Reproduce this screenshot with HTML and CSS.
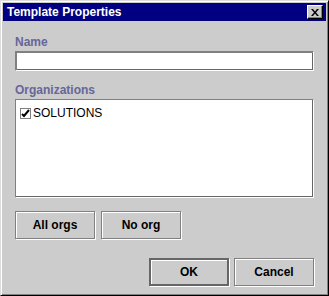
FILE: index.html
```html
<!DOCTYPE html>
<html lang="en">
<head>
    <meta charset="UTF-8">
    <title>Template Properties</title>
    <link rel="stylesheet" href="styles.css">
</head>
<body>

    <div class="window">

        <div class="titlebar">
            <span class="title">Template Properties</span>
            <button class="close">
                <svg width="8" height="7" viewBox="0 0 8 7">
                    <path d="M0 0h2l2 2.5L6 0h2L5 3.5 8 7H6L4 4.5 2 7H0l3-3.5z" fill="#000"/>
                </svg>
            </button>
        </div>

        <div class="content">

            <label class="field-label">Name</label>
            <div class="text-field"></div>

            <label class="field-label orgs-label">Organizations</label>
            <div class="list">
                <div class="list-item">
                    <span class="check">
                        <svg width="9" height="9" viewBox="0 0 9 9">
                            <path d="M1 5l2 2 5-6" stroke="#000" stroke-width="2" fill="none"/>
                        </svg>
                    </span>
                    <span>SOLUTIONS</span>
                </div>
            </div>

            <div class="org-buttons">
                <button class="btn">All orgs</button>
                <button class="btn">No org</button>
            </div>

            <div class="dialog-buttons">
                <button class="btn default">OK</button>
                <button class="btn">Cancel</button>
            </div>

        </div>

    </div>

</body>
</html>
```

FILE: styles.css
```css
* {
    margin: 0;
    padding: 0;
    box-sizing: border-box;
}

body {
    background: #cccccc;
    font-family: "Liberation Sans", Arial, sans-serif;
}

.window {
    width: 329px;
    height: 296px;
    background: #cccccc;
    border-top: 1px solid #dddddd;
    border-left: 1px solid #dddddd;
    border-right: 1px solid #000000;
    border-bottom: 1px solid #000000;
    box-shadow: inset 1px 1px 0 #ffffff, inset -1px -1px 0 #808080;
    padding: 2px;
    display: flex;
    flex-direction: column;
}

.titlebar {
    height: 18px;
    background: #000080;
    display: flex;
    align-items: center;
    justify-content: space-between;
    padding: 0 3px 0 4px;
}

.title {
    color: #ffffff;
    font-weight: bold;
    font-size: 12px;
}

.close {
    width: 16px;
    height: 14px;
    background: #cccccc;
    border-top: 1px solid #ffffff;
    border-left: 1px solid #ffffff;
    border-right: 1px solid #000000;
    border-bottom: 1px solid #000000;
    box-shadow: inset -1px -1px 0 #808080;
    display: flex;
    align-items: center;
    justify-content: center;
}

.content {
    padding: 14px 12px 0 12px;
    display: flex;
    flex-direction: column;
}

.field-label {
    color: #666699;
    font-weight: bold;
    font-size: 12px;
    height: 15px;
    line-height: 15px;
}

.orgs-label {
    margin-top: 12px;
}

.text-field {
    height: 20px;
    margin-top: 1px;
    background: #ffffff;
    border-top: 1px solid #808080;
    border-left: 1px solid #808080;
    border-right: 1px solid #ffffff;
    border-bottom: 1px solid #ffffff;
    box-shadow: 1px 1px 0 #808080 inset, -1px -1px 0 #666666 inset;
}

.list {
    height: 99px;
    margin-top: 1px;
    background: #ffffff;
    border-top: 1px solid #808080;
    border-left: 1px solid #808080;
    border-right: 1px solid #ffffff;
    border-bottom: 1px solid #ffffff;
    box-shadow: -1px -1px 0 #666666 inset;
    padding: 6px 4px;
}

.list-item {
    display: flex;
    align-items: center;
    gap: 2px;
    font-size: 12px;
    color: #000000;
}

.check {
    width: 11px;
    height: 11px;
    border: 1px solid #808080;
    background: #ffffff;
    display: flex;
    align-items: center;
    justify-content: center;
}

.btn {
    width: 80px;
    height: 28px;
    background: #cccccc;
    font-family: "Liberation Sans", Arial, sans-serif;
    font-weight: bold;
    font-size: 12px;
    color: #000000;
    border: 1px solid #808080;
    box-shadow: inset 1px 1px 0 #ffffff, 1px 1px 0 #ffffff;
}

.btn.default {
    border: 2px solid #666666;
}

.org-buttons {
    display: flex;
    gap: 6px;
    margin-top: 13px;
}

.dialog-buttons {
    display: flex;
    justify-content: flex-end;
    gap: 5px;
    margin-top: 19px;
}
```
